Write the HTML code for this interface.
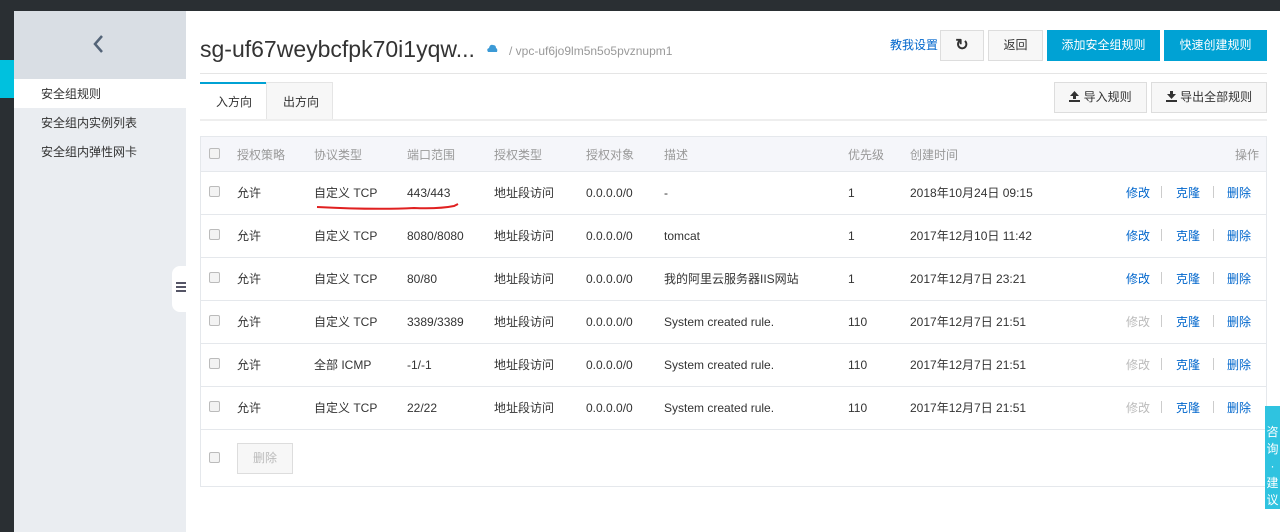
<html><head><style>
*{margin:0;padding:0;box-sizing:border-box}
body{width:1280px;height:532px;overflow:hidden;background:#fff;font-family:"Liberation Sans","Noto Sans CJK SC",sans-serif;font-size:12px;line-height:14px;color:#333;position:relative}
.a{position:absolute;line-height:14px}
.cb{position:absolute;width:11px;height:11px;border:1px solid #bbb;border-radius:2px;background:#f3f3f3}
.btn{position:absolute;border:1px solid #ddd;background:#f7f7f7;text-align:center;font-size:12px;color:#333}
.row{position:absolute;left:201px;width:1066px;height:43px;border-top:1px solid #e5e8ec}
.row span{position:absolute;top:14px;white-space:nowrap;line-height:14px;height:14px}
.l{color:#0066cc}.g{color:#bbb}
.sep{position:absolute;top:14px;width:1px;height:12px;background:#ccc}
.hd span{position:absolute;top:11px;line-height:14px}
</style></head><body>
<div class="a" style="left:0;top:0;width:1280px;height:11px;background:#2a2f33"></div>
<div class="a" style="left:0;top:11px;width:14px;height:521px;background:#2a2f33"></div>
<div class="a" style="left:0;top:60px;width:14px;height:38px;background:#00c1de"></div>
<div class="a" style="left:14px;top:11px;width:172px;height:521px;background:#eaedf1"></div>
<div class="a" style="left:14px;top:11px;width:172px;height:68px;background:#d9dee4"></div>
<svg class="a" style="left:92px;top:34px" width="14" height="20"><path d="M10 2 L3 10 L10 18" stroke="#546478" stroke-width="2.5" fill="none"/></svg>
<div class="a" style="left:14px;top:79px;width:172px;height:29px;background:#fff"></div>
<div class="a" style="left:41px;top:87px">安全组规则</div>
<div class="a" style="left:41px;top:116px">安全组内实例列表</div>
<div class="a" style="left:41px;top:145px">安全组内弹性网卡</div>
<div class="a" style="left:172px;top:266px;width:14px;height:46px;background:#fff;border-radius:8px 0 0 8px"></div>
<div class="a" style="left:176px;top:282px;width:10px;height:2px;background:#556;box-shadow:0 4px 0 #556,0 8px 0 #556"></div>
<div class="a" style="left:200px;top:36px;font-size:23px;line-height:26px;color:#333">sg-uf67weybcfpk70i1yqw...</div>
<svg class="a" style="left:486px;top:43px" width="12" height="10"><path d="M2 9 Q0 6 3 5 Q4 1 7 2 Q10 2 10 5 Q12 6 11 9 Z" fill="#3c9ad6"/></svg>
<div class="a" style="left:509px;top:44px;color:#999">/ vpc-uf6jo9lm5n5o5pvznupm1</div>
<div class="a" style="left:890px;top:38px;color:#0066cc">教我设置</div>
<div class="btn" style="left:940px;top:30px;width:44px;height:31px;line-height:29px;font-size:16px;font-weight:bold">&#x21bb;</div>
<div class="btn" style="left:988px;top:30px;width:55px;height:31px;line-height:29px">返回</div>
<div class="btn" style="left:1047px;top:30px;width:113px;height:31px;line-height:29px;background:#00a2d4;border-color:#00a2d4;color:#fff">添加安全组规则</div>
<div class="btn" style="left:1164px;top:30px;width:103px;height:31px;line-height:29px;background:#00a2d4;border-color:#00a2d4;color:#fff">快速创建规则</div>
<div class="a" style="left:200px;top:73px;width:1067px;height:1px;background:#e5e5e5"></div>
<div class="a" style="left:200px;top:82px;width:66px;height:38px;border-top:2px solid #00a2d4;background:#fff"></div>
<div class="a" style="left:216px;top:95px">入方向</div>
<div class="a" style="left:266px;top:82px;width:67px;height:38px;border:1px solid #e5e5e5;background:#f7f7f7"></div>
<div class="a" style="left:283px;top:95px">出方向</div>
<div class="a" style="left:200px;top:119px;width:1067px;height:2px;background:#eee"></div>
<div class="btn" style="left:1054px;top:82px;width:93px;height:31px;line-height:29px"><svg width="11" height="11" style="vertical-align:-1px"><path d="M5.5 0 L10 5 H7 V8 H4 V5 H1 Z M0 9 H11 V11 H0 Z" fill="#333"/></svg> 导入规则</div>
<div class="btn" style="left:1151px;top:82px;width:116px;height:31px;line-height:29px"><svg width="11" height="11" style="vertical-align:-1px"><path d="M4 0 H7 V3 H10 L5.5 8 L1 3 H4 Z M0 9 H11 V11 H0 Z" fill="#333"/></svg> 导出全部规则</div>
<div class="a" style="left:200px;top:136px;width:1067px;height:351px;border:1px solid #e5e8ec"></div>
<div class="a hd" style="left:201px;top:137px;width:1065px;height:34px;background:#f5f6fa;color:#999">
<div class="cb" style="left:8px;top:11px"></div>
<span style="left:36px">授权策略</span><span style="left:113px">协议类型</span><span style="left:206px">端口范围</span><span style="left:293px">授权类型</span><span style="left:385px">授权对象</span><span style="left:463px">描述</span><span style="left:647px">优先级</span><span style="left:709px">创建时间</span><span style="left:1034px">操作</span></div>
<div class="row" style="top:171px"><div class="cb" style="left:8px;top:14px"></div><span style="left:36px">允许</span><span style="left:113px">自定义 TCP</span><span style="left:206px">443/443</span><span style="left:293px">地址段访问</span><span style="left:385px">0.0.0.0/0</span><span style="left:463px">-</span><span style="left:647px">1</span><span style="left:709px">2018年10月24日 09:15</span><span class="l" style="left:925px">修改</span><div class="sep" style="left:960px"></div><span class="l" style="left:975px">克隆</span><div class="sep" style="left:1012px"></div><span class="l" style="left:1026px">删除</span></div>
<svg class="a" style="left:314px;top:200px" width="148" height="12"><path d="M3 7 Q60 10 100 8 Q125 9 140 6 L144 4" stroke="#e02020" stroke-width="2" fill="none"/></svg>
<div class="row" style="top:214px"><div class="cb" style="left:8px;top:14px"></div><span style="left:36px">允许</span><span style="left:113px">自定义 TCP</span><span style="left:206px">8080/8080</span><span style="left:293px">地址段访问</span><span style="left:385px">0.0.0.0/0</span><span style="left:463px">tomcat</span><span style="left:647px">1</span><span style="left:709px">2017年12月10日 11:42</span><span class="l" style="left:925px">修改</span><div class="sep" style="left:960px"></div><span class="l" style="left:975px">克隆</span><div class="sep" style="left:1012px"></div><span class="l" style="left:1026px">删除</span></div>
<div class="row" style="top:257px"><div class="cb" style="left:8px;top:14px"></div><span style="left:36px">允许</span><span style="left:113px">自定义 TCP</span><span style="left:206px">80/80</span><span style="left:293px">地址段访问</span><span style="left:385px">0.0.0.0/0</span><span style="left:463px">我的阿里云服务器IIS网站</span><span style="left:647px">1</span><span style="left:709px">2017年12月7日 23:21</span><span class="l" style="left:925px">修改</span><div class="sep" style="left:960px"></div><span class="l" style="left:975px">克隆</span><div class="sep" style="left:1012px"></div><span class="l" style="left:1026px">删除</span></div>
<div class="row" style="top:300px"><div class="cb" style="left:8px;top:14px"></div><span style="left:36px">允许</span><span style="left:113px">自定义 TCP</span><span style="left:206px">3389/3389</span><span style="left:293px">地址段访问</span><span style="left:385px">0.0.0.0/0</span><span style="left:463px">System created rule.</span><span style="left:647px">110</span><span style="left:709px">2017年12月7日 21:51</span><span class="g" style="left:925px">修改</span><div class="sep" style="left:960px"></div><span class="l" style="left:975px">克隆</span><div class="sep" style="left:1012px"></div><span class="l" style="left:1026px">删除</span></div>
<div class="row" style="top:343px"><div class="cb" style="left:8px;top:14px"></div><span style="left:36px">允许</span><span style="left:113px">全部 ICMP</span><span style="left:206px">-1/-1</span><span style="left:293px">地址段访问</span><span style="left:385px">0.0.0.0/0</span><span style="left:463px">System created rule.</span><span style="left:647px">110</span><span style="left:709px">2017年12月7日 21:51</span><span class="g" style="left:925px">修改</span><div class="sep" style="left:960px"></div><span class="l" style="left:975px">克隆</span><div class="sep" style="left:1012px"></div><span class="l" style="left:1026px">删除</span></div>
<div class="row" style="top:386px"><div class="cb" style="left:8px;top:14px"></div><span style="left:36px">允许</span><span style="left:113px">自定义 TCP</span><span style="left:206px">22/22</span><span style="left:293px">地址段访问</span><span style="left:385px">0.0.0.0/0</span><span style="left:463px">System created rule.</span><span style="left:647px">110</span><span style="left:709px">2017年12月7日 21:51</span><span class="g" style="left:925px">修改</span><div class="sep" style="left:960px"></div><span class="l" style="left:975px">克隆</span><div class="sep" style="left:1012px"></div><span class="l" style="left:1026px">删除</span></div>
<div class="row" style="top:429px;height:58px"><div class="cb" style="left:8px;top:22px"></div></div>
<div class="btn" style="left:237px;top:443px;width:56px;height:31px;line-height:29px;color:#bbb">删除</div>
<div class="a" style="left:1265px;top:406px;width:15px;height:103px;background:#2fc3e0;color:#fff;font-size:12px;line-height:17px;text-align:center;padding-top:18px">咨<br>询<br>·<br>建<br>议</div>
</body></html>
